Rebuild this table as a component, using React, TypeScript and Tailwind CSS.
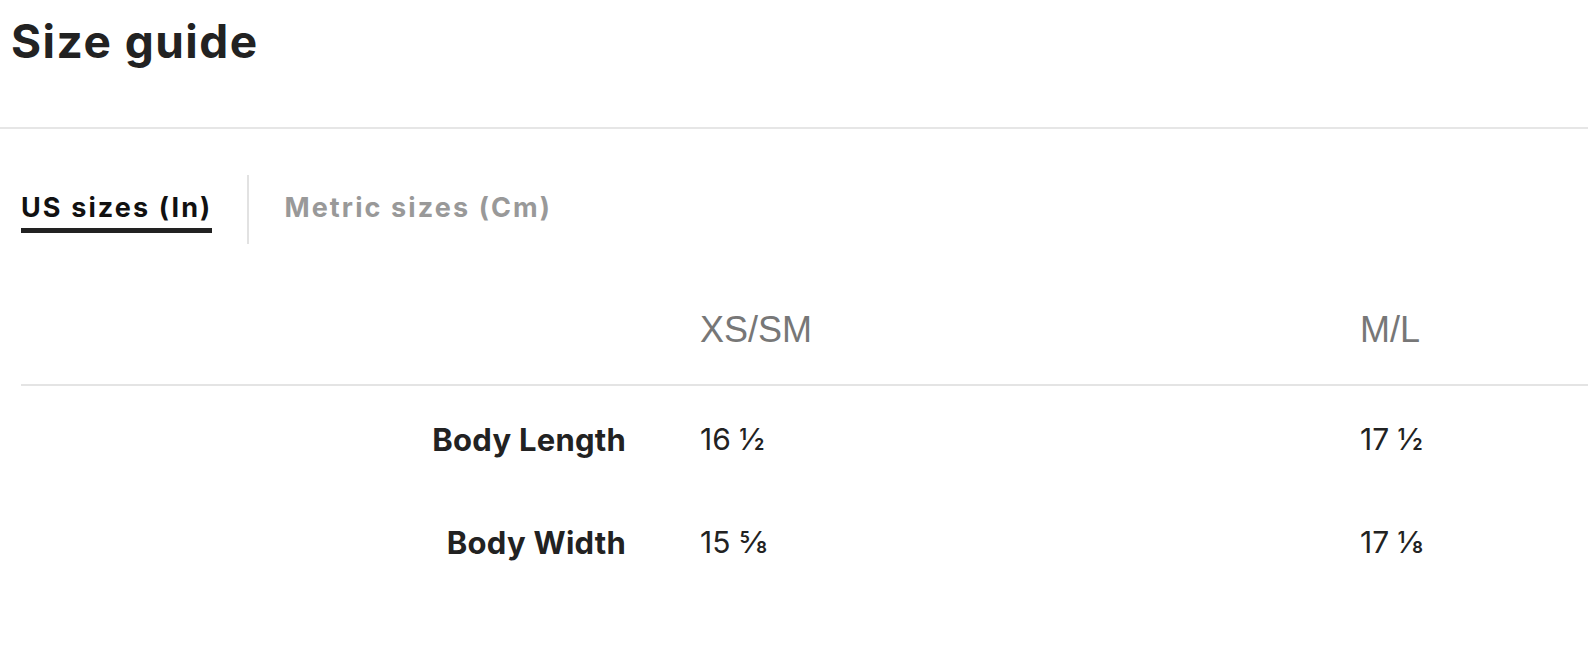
import React from "react";

const sans = "font-['Inter','Liberation_Sans',sans-serif]";

export default function App() {
  const rows = [
    { label: "Body Length", a: "16 ½", b: "17 ½" },
    { label: "Body Width", a: "15 ⅝", b: "17 ⅛" },
  ];
  return (
    <div className={`w-[1588px] h-[651px] bg-white overflow-hidden ${sans}`}>
      <div className="h-[127px] pl-[11px] pt-[18px]">
        <h1 className="text-[46px] leading-none font-bold text-[#222] tracking-[0.032em]">Size guide</h1>
      </div>
      <div className="h-[2px] bg-[#e6e6e6]" />
      <div className="pl-[21px]">
        <div className="mt-[46px] flex items-start h-[69px]">
          <div className="pt-[19px]">
            <span className="block text-[27px] leading-none font-bold text-[#111] tracking-[0.078em] pb-[7px] border-b-[5px] border-[#222] whitespace-nowrap">
              US sizes (In)
            </span>
          </div>
          <div className="ml-[35px] w-[2px] h-[69px] bg-[#e2e2e2]" />
          <div className="ml-[35px] pt-[19px]">
            <span className="block text-[27px] leading-none font-bold text-[#999] tracking-[0.078em] whitespace-nowrap">
              Metric sizes (Cm)
            </span>
          </div>
        </div>
        <div className="grid grid-cols-[679px_660px_1fr] h-[142px] border-b-2 border-[#e4e4e4]">
          <div />
          <div className="pt-[68px] text-[36px] leading-none text-[#777] font-['Liberation_Sans',sans-serif]">XS/SM</div>
          <div className="pt-[68px] text-[36px] leading-none text-[#777] font-['Liberation_Sans',sans-serif]">M/L</div>
        </div>
        {rows.map((r) => (
          <div key={r.label} className="grid grid-cols-[679px_660px_1fr] h-[103px]">
            <div className="pt-[38px] pr-[74px] text-right text-[31px] leading-none font-bold text-[#222] tracking-[0.008em] whitespace-nowrap">
              {r.label}
            </div>
            <div className="pt-[38px] text-[30px] leading-none text-[#222]">{r.a}</div>
            <div className="pt-[38px] text-[30px] leading-none text-[#222]">{r.b}</div>
          </div>
        ))}
      </div>
    </div>
  );
}
